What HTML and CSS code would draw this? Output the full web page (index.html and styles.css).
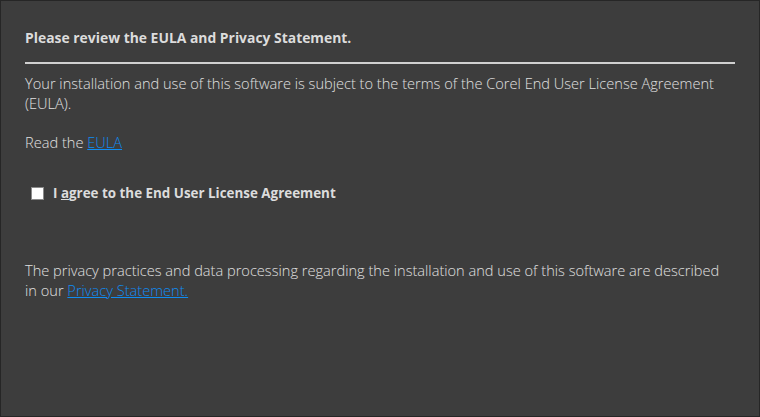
FILE: index.html
```html
<!DOCTYPE html>
<html>
<head>
<meta charset="utf-8">
<link rel="stylesheet" href="styles.css">
</head>
<body>
<div class="window">
  <h1 class="title">Please review the EULA and Privacy Statement.</h1>
  <hr class="rule">
  <p class="text">Your installation and use of this software is subject to the terms of the Corel End User License Agreement (EULA).</p>
  <p class="text read">Read the <a class="link" href="#">EULA</a></p>
  <label class="agree">
    <span class="box"></span>
    <span class="agree-text">I <u>a</u>gree to the End User License Agreement</span>
  </label>
  <p class="text privacy">The privacy practices and data processing regarding the installation and use of this software are described in our <a class="link" href="#">Privacy Statement.</a></p>
</div>
</body>
</html>
```
FILE: styles.css
```css
html, body {
  margin: 0;
  padding: 0;
  width: 760px;
  height: 417px;
  overflow: hidden;
}
body {
  font-family: "Open Sans", "Noto Sans", sans-serif;
  color: #dcdcdc;
}
.window {
  box-sizing: border-box;
  width: 760px;
  height: 417px;
  background: #3d3d3d;
  border: 1px solid #262626;
  padding: 27px 24px 0 24px;
  font-size: 14px;
}
.title {
  margin: 0;
  font-size: 13.9px;
  font-weight: 700;
  line-height: 20px;
  color: #dcdcdc;
}
.rule {
  margin: 14px 0 0 0;
  border: 0;
  height: 2px;
  background: #d0d0d0;
}
.text {
  margin: 0;
  line-height: 20px;
  font-size: 14.6px;
  font-weight: 300;
  color: #e0e0e0;
}
.rule + .text { margin-top: 9px; }
.read { margin-top: 19px; }
.link {
  color: #0f8cf2;
  text-decoration: underline;
}
.agree {
  display: flex;
  align-items: center;
  gap: 9px;
  margin: 31px 0 0 6px;
  font-weight: 700;
  font-size: 13.4px;
  line-height: 20px;
}
.box {
  width: 11px;
  height: 11px;
  background: #ffffff;
  border: 1px solid #8a8a8a;
}
.agree u { text-decoration: underline; }
.privacy {
  margin-top: 57px;
  padding-right: 12px;
}
```
